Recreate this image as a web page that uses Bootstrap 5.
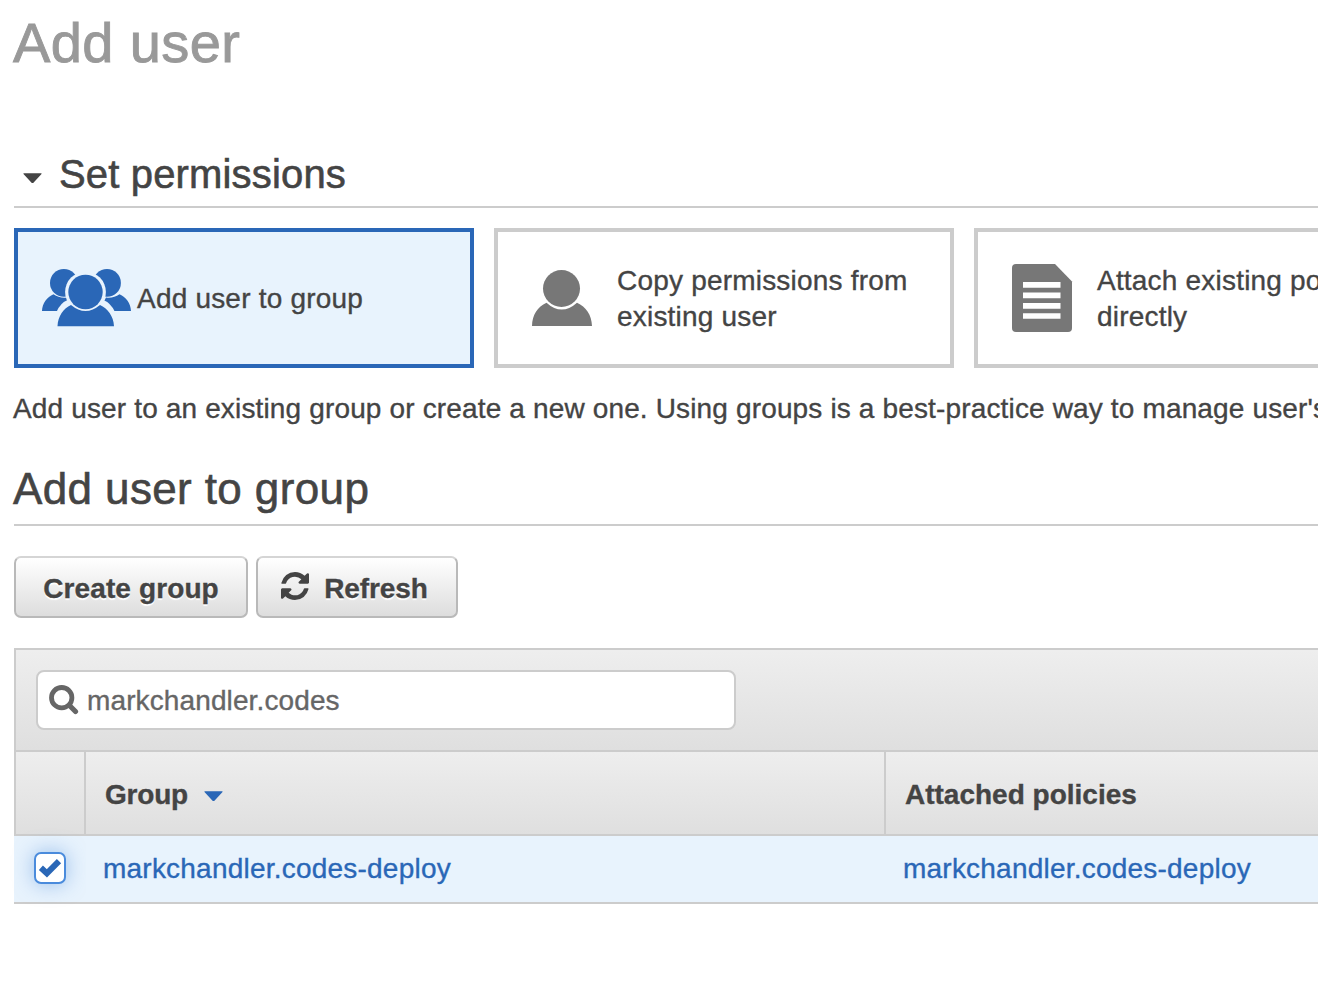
<!DOCTYPE html>
<html lang="en">
<head>
<meta charset="utf-8">
<meta name="viewport" content="width=device-width, initial-scale=1">
<title>Add user</title>
<link href="https://cdn.jsdelivr.net/npm/bootstrap@5.3.0/dist/css/bootstrap.min.css" rel="stylesheet">
<style>
  body { font: 28px/36px "Liberation Sans", Arial, sans-serif; color: #444; overflow: hidden; -webkit-text-stroke: .35px; }
  .page { padding: 11px 0 0 14px; height: 982px; overflow: hidden; }
  h1 { font-size: 56px; line-height: 64px; color: #999; letter-spacing: .4px; margin: 0 0 76px -1px; font-weight: 400; -webkit-text-stroke: .9px; }
  h2 { font-weight: 400; margin: 0; border-bottom: 2px solid #ccc; white-space: nowrap; -webkit-text-stroke: .6px; }
  .h-perm { font-size: 40px; line-height: 46px; height: 57px; padding-left: 9px; letter-spacing: .16px; }
  .h-perm svg { margin: 22px 17px 0 0; }
  .h-group { font-size: 44px; line-height: 50px; height: 62px; letter-spacing: .38px; text-indent: -1px; }
  .options { gap: 20px; margin-top: 20px; }
  .option { flex: 0 0 460px; height: 140px; border: 4px solid #ccc; letter-spacing: .2px; }
  .option.selected { border-color: #2a67b7; background: #e8f3fd; }
  .option .glyph { flex: 0 0 119px; }
  .option .glyph svg { overflow: visible; margin-left: 34px; }
  .option.selected .glyph svg { margin-left: 24px; }
  .option .caption { padding-top: 2px; }
  .intro { margin: 23px 0 37px -1px; letter-spacing: .15px; white-space: nowrap; }
  .actions { gap: 8px; margin: 30px 0; }
  .btn-aws { height: 62px; padding: 4px 0 0; border: 2px solid #b9b9b9; border-top-color: #d5d5d5; border-radius: 7px; background: linear-gradient(#fff, #ddd) !important; font: bold 28px/36px "Liberation Sans", Arial, sans-serif; color: #444 !important; text-shadow: 0 2px 1px #fff; letter-spacing: .12px; }
  .btn-create { width: 234px; } .btn-refresh { width: 202px; padding-right: 5px; letter-spacing: -.1px; }
  .toolbar { height: 104px; border: 2px solid #ccc; border-right: 0; padding: 20px; background: linear-gradient(#eee, #dfdfdf); }
  .search-box { width: 700px; height: 60px; border: 2px solid #ccc; border-radius: 8px; background: #fff; padding: 0 11px; }
  .search-box svg { margin-top: -1px; }
  .search-box input { color: #666 !important; font-size: 28px; line-height: 36px; height: 56px; padding: 2px 0 0; margin-left: 8px; letter-spacing: .12px; -webkit-text-stroke: .35px; }
  .groups { width: 100%; table-layout: fixed; border-collapse: separate; border-spacing: 0; letter-spacing: .22px; }
  .groups th { height: 84px; border: 0 solid #ccc; border-width: 0 2px 2px 0; background: linear-gradient(#eee, #dfdfdf); padding: 4px 19px 0; letter-spacing: 0; }
  .groups th:nth-child(2) { letter-spacing: -.2px; }
  .groups th:first-child { border-left-width: 2px; }
  .groups th:last-child, .groups td { border-right: 0; }
  .groups td { height: 68px; background: #e8f3fd; border-bottom: 2px solid #ccc; padding: 0 17px; }
  .groups td:first-child { padding-bottom: 2px; }
  .groups a { color: #2a67b7; }
  .check { width: 32px; height: 32px; margin-left: 3px; border: 2px solid #4a8bdc; border-radius: 7px; background: #fff; box-shadow: 0 0 20px rgba(74,139,220,.5); }
</style>
</head>
<body>
<main class="page">
  <h1>Add user</h1>
  <section>
    <h2 class="h-perm d-flex align-items-start"><svg width="19" height="11" viewBox="0 0 19 11"><path fill="#444" d="M1 .2h17q1.2 0 .3 1l-7.4 8q-1.4 1.8-2.8 0L.7 1.2Q-.2.2 1 .2z"/></svg>Set permissions</h2>
    <div class="options d-flex">
      <div class="option selected d-flex align-items-center">
        <span class="glyph d-flex"><svg width="90" height="58" viewBox="0 1 90 58" fill="#2a67b7">
          <circle cx="21.900" cy="14.900" r="13.900"/><circle cx="65" cy="14.900" r="13.900"/>
          <path d="M0 43C.3 35 5 29 11.500 26.200Q17.500 30.500 25 29.500L32 43zM89 43C88.700 35 84 29 77.500 26.200Q71.500 30.500 64 29.500L57 43z"/>
          <path fill="#e8f3fd" d="M14.500 44Q18 35 26.500 31.500L60.500 31.500Q69 35 73 44z"/>
          <circle cx="43.500" cy="24" r="20.400" fill="#e8f3fd"/><circle cx="43.500" cy="24" r="17.200"/>
          <path d="M15.500 58.300C16 48 21.500 40.500 29 37Q43.500 49 58 37C65.500 40.500 71.500 48 72 58.300z"/></svg></span>
        <span class="caption">Add user to group</span>
      </div>
      <div class="option d-flex align-items-center">
        <span class="glyph d-flex"><svg width="60" height="56" viewBox="0 0 60 56" fill="#777"><circle cx="29.500" cy="18.500" r="18.500"/><path d="M0 56C.3 45 5.500 36.500 14.500 32.700Q29.700 46.500 45 32.700C54 36.500 59.700 45 60 56z"/></svg></span>
        <span class="caption">Copy permissions from<br>existing user</span>
      </div>
      <div class="option d-flex align-items-center">
        <span class="glyph d-flex"><svg width="60" height="68" viewBox="0 0 60 68"><path fill="#777" d="M4 0H43L60 17.500V64q0 4-4 4H4q-4 0-4-4V4Q0 0 4 0z"/><path stroke="#fff" stroke-width="5.700" d="M11 20.800H48.500M11 31.300H48.500M11 41.800H48.500M11 52H48.500"/></svg></span>
        <span class="caption">Attach existing policies<br>directly</span>
      </div>
    </div>
    <p class="intro">Add user to an existing group or create a new one. Using groups is a best-practice way to manage user's</p>
  </section>
  <section>
    <h2 class="h-group">Add user to group</h2>
    <div class="actions d-flex">
      <button class="btn btn-aws btn-create" type="button">Create group</button>
      <button class="btn btn-aws btn-refresh d-flex align-items-center justify-content-center" type="button"><svg width="28" height="28" viewBox="0 0 1536 1536" fill="#444" style="margin:-6px 15px 0 0"><path d="M1511 928q0 5-1 7-64 268-268 434.500T764 1536q-146 0-282.500-55T238 1324l-129 129q-19 19-45 19t-45-19-19-45V960q0-26 19-45t45-19h448q26 0 45 19t19 45-19 45l-137 137q71 66 161 102t187 36q134 0 250-65t186-179q11-17 53-117 8-23 30-23h192q13 0 22.500 9.500t9.500 22.500zm25-800v448q0 26-19 45t-45 19h-448q-26 0-45-19t-19-45 19-45l138-138Q969 256 768 256q-134 0-250 65T332 500q-11 17-53 117-8 23-30 23H50q-13 0-22.500-9.500T18 608v-7q65-268 270-434.500T768 0q146 0 284 55.500T1297 212l130-129q19-19 45-19t45 19 19 45z"/></svg>Refresh</button>
    </div>
    <div class="toolbar">
      <div class="search-box d-flex align-items-center">
        <svg class="flex-shrink-0" width="30" height="30" viewBox="0 0 30 30" fill="none" stroke="#666"><circle cx="12.700" cy="12.700" r="10.200" stroke-width="4.800"/><path d="M20.500 20.500L26.500 26.500" stroke-width="5.200" stroke-linecap="round"/></svg>
        <input class="form-control border-0 shadow-none bg-transparent" type="text" value="markchandler.codes" aria-label="Search groups">
      </div>
    </div>
    <table class="groups">
      <colgroup><col style="width:72px"><col style="width:800px"><col></colgroup>
      <thead><tr><th></th><th>Group <svg width="19" height="11" viewBox="0 0 19 11" style="margin-left:8px"><path fill="#2a67b7" d="M1 .2h17q1.200 0 .3 1l-7.400 8q-1.400 1.800-2.800 0L.7 1.200Q-.2.2 1 .2z"/></svg></th><th>Attached policies</th></tr></thead>
      <tbody><tr>
        <td><div class="check d-flex align-items-center justify-content-center"><svg width="24" height="22" viewBox="0 0 24 22"><path fill="none" stroke="#2a67b7" stroke-width="6" d="M2.900 10.800L8.900 16.400L21 4.200"/></svg></div></td>
        <td><a class="text-decoration-none" href="#">markchandler.codes-deploy</a></td>
        <td><a class="text-decoration-none" href="#">markchandler.codes-deploy</a></td>
      </tr></tbody>
    </table>
  </section>
</main>
<script src="https://cdn.jsdelivr.net/npm/bootstrap@5.3.0/dist/js/bootstrap.bundle.min.js"></script>
</body>
</html>
